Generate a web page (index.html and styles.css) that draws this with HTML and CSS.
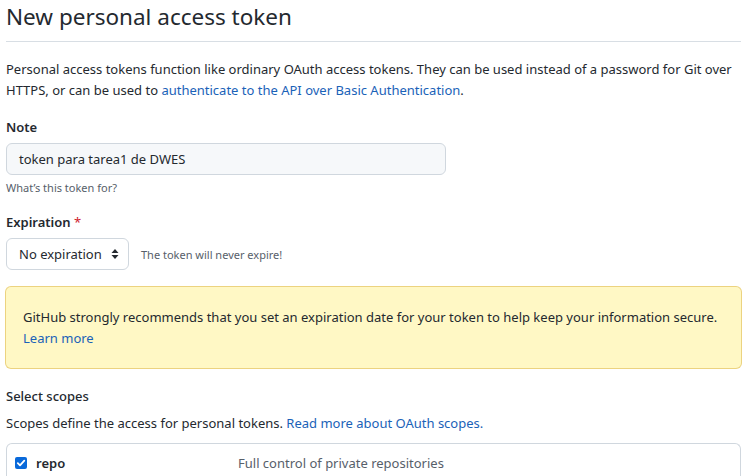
FILE: index.html
```html
<!DOCTYPE html>
<html>
<head>
<meta charset="utf-8">
<link rel="stylesheet" href="styles.css">
</head>
<body>
<div class="page">
  <h2 class="title">New personal access token</h2>
  <p class="intro">Personal access tokens function like ordinary OAuth access tokens. They can be used instead of a password for Git over HTTPS, or can be used to <a href="#">authenticate to the API over Basic Authentication</a>.</p>

  <div class="field">
    <label class="label">Note</label>
    <div class="input">token para tarea1 de DWES</div>
    <div class="note">What’s this token for?</div>
  </div>

  <div class="field field-exp">
    <label class="label">Expiration <span class="req">*</span></label>
    <div class="exp-row">
      <div class="select">No expiration
        <svg class="caret" width="8" height="12" viewBox="0 0 8 12"><path d="M4 1 L7.5 5 H0.5 Z M4 11 L0.5 7 H7.5 Z" fill="#24292f"/></svg>
      </div>
      <span class="hint">The token will never expire!</span>
    </div>
  </div>

  <div class="flash">
    <p>GitHub strongly recommends that you set an expiration date for your token to help keep your information secure.</p>
    <a href="#">Learn more</a>
  </div>

  <div class="scopes-head">Select scopes</div>
  <p class="scopes-desc">Scopes define the access for personal tokens. <a href="#">Read more about OAuth scopes.</a></p>

  <div class="scope-table">
    <div class="scope-row">
      <span class="check"><svg width="12" height="12" viewBox="0 0 12 12"><rect width="12" height="12" rx="2" fill="#0969da"/><path d="M2.8 6.2 L5 8.4 L9.3 3.6" stroke="#fff" stroke-width="1.8" fill="none" stroke-linecap="round" stroke-linejoin="round"/></svg></span>
      <span class="scope-name">repo</span>
      <span class="scope-desc">Full control of private repositories</span>
    </div>
  </div>
</div>
</body>
</html>
```

FILE: styles.css
```css
html, body {
  margin: 0;
  padding: 0;
  background: #fff;
}
body {
  font-family: "Noto Sans", "Open Sans", sans-serif;
  font-size: 13px;
  color: #24292f;
  overflow: hidden;
  height: 476px;
}
a { color: #1a62b8; text-decoration: none; }
.page {
  width: 735px;
  padding-left: 6px;
}
.title {
  margin: 0;
  font-size: 22.5px;
  font-weight: 400;
  line-height: 34px;
  padding-bottom: 7px;
  border-bottom: 1px solid #d8dee4;
}
.intro {
  margin: 17px 0 0;
  line-height: 21px;
}
.field { margin-top: 16px; }
.field-exp { margin-top: 15px; }
.label {
  display: block;
  font-weight: 600;
  line-height: 20px;
  margin-bottom: 6px;
}
.req { color: #cf222e; font-weight: 400; }
.input {
  width: 414px;
  height: 30px;
  border: 1px solid #d0d7de;
  border-radius: 6px;
  background: #f6f8fa;
  padding: 0 12px;
  line-height: 30px;
}
.note {
  font-size: 11px;
  color: #57606a;
  margin-top: 4px;
  line-height: 18px;
}
.exp-row {
  display: flex;
  align-items: center;
  gap: 12px;
}
.select {
  display: flex;
  align-items: center;
  justify-content: space-between;
  width: 100px;
  height: 30px;
  border: 1px solid #d0d7de;
  border-radius: 6px;
  padding: 0 9px 0 12px;
  background: #fff;
}
.caret { display: block; }
.hint { font-size: 11px; color: #57606a; }
.flash {
  margin-top: 16px;
  margin-right: -1px;
  margin-left: -1px;
  background: #fff8c5;
  border: 1px solid rgba(212,167,44,0.45);
  border-radius: 6px;
  padding: 20px 17px 19px;
  line-height: 21px;
}
.flash p { margin: 0; }
.scopes-head {
  margin-top: 17px;
  line-height: 20px;
  font-weight: 500;
}
.scopes-desc {
  margin: 7px 0 0;
  line-height: 20px;
}
.scope-table {
  margin-top: 10px;
  border: 1px solid #d0d7de;
  border-radius: 6px 6px 0 0;
  border-bottom: none;
  height: 40px;
}
.scope-row {
  display: flex;
  align-items: center;
  padding: 10px 8px 0;
}
.check { display: flex; width: 12px; height: 12px; }
.scope-name {
  font-weight: 600;
  margin-left: 9px;
  width: 202px;
}
.scope-desc { color: #57606a; }
```
